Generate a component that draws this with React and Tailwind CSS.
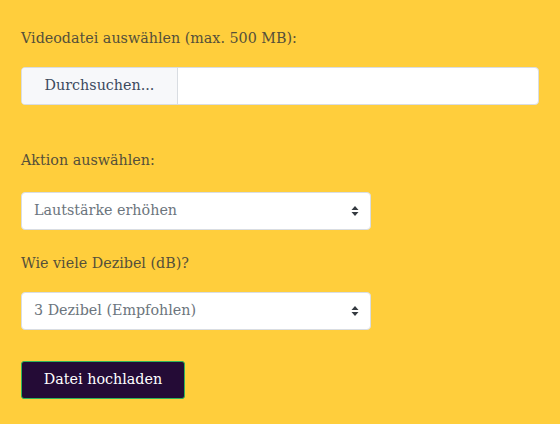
import React, { useState } from 'react';

const font = { fontFamily: '"DejaVu Serif", serif' };

const SelectArrows = () => (
  <svg width="8" height="12" viewBox="0 0 8 12" className="shrink-0">
    <path d="M4 1 L7.5 5 L0.5 5 Z" fill="#343a40" />
    <path d="M4 11 L7.5 7 L0.5 7 Z" fill="#343a40" />
  </svg>
);

const FakeSelect = ({ value }) => (
  <div className="flex h-[38px] w-[350px] items-center justify-between rounded-[4px] border border-[#d9dde2] bg-white pl-3 pr-[11px] text-[14.3px] text-[#6c757d]">
    <span>{value}</span>
    <SelectArrows />
  </div>
);

const App = () => {
  const [action] = useState('Lautstärke erhöhen');
  const [db] = useState('3 Dezibel (Empfohlen)');

  const labelClass = 'text-[14.3px] text-[#55503a] leading-[22px]';

  return (
    <div className="min-h-[424px] w-[560px] bg-[#ffce3c] px-[21px] pt-[27px]" style={font}>
      {/* File upload */}
      <label className={`block ${labelClass}`}>Videodatei auswählen (max. 500 MB):</label>
      <div className="mt-[18px] flex h-[38px] w-[518px] overflow-hidden rounded-[4px] border border-[#d9dde2] bg-white">
        <div className="flex w-[156px] items-center justify-center border-r border-[#d9dde2] bg-[#f7f8fa] text-[14.3px] text-[#3c4a5e]">
          Durchsuchen...
        </div>
        <div className="flex-1" />
      </div>

      {/* Action */}
      <label className={`mt-[44px] block ${labelClass}`}>Aktion auswählen:</label>
      <div className="mt-[21px]">
        <FakeSelect value={action} />
      </div>

      <label className={`mt-[22px] block ${labelClass}`}>Wie viele Dezibel (dB)?</label>
      <div className="mt-[18px]">
        <FakeSelect value={db} />
      </div>

      <button
        type="button"
        className="mt-[31px] flex h-[38px] w-[164px] items-center justify-center rounded-[3px] border border-[#2fb35a] bg-[#240b36] text-[14.3px] text-white"
      >
        Datei hochladen
      </button>
    </div>
  );
};

export default App;
